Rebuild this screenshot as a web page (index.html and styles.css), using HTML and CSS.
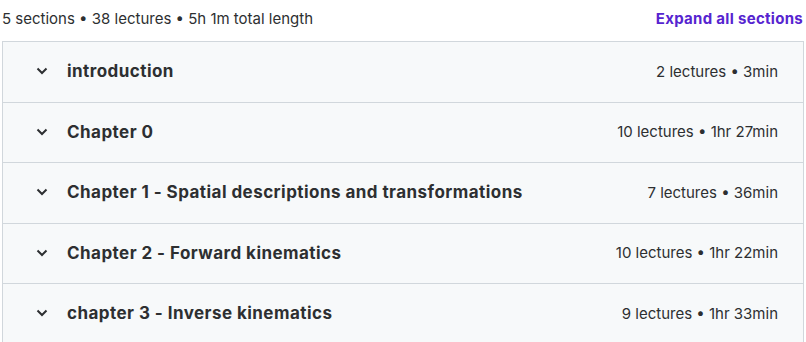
FILE: index.html
```html
<!DOCTYPE html>
<html lang="en">
<head>
  <meta charset="UTF-8">
  <meta name="viewport" content="width=device-width, initial-scale=1.0">
  <link rel="stylesheet" href="styles.css">
  <title>Course content</title>
</head>
<body>

<div id="curriculum">
  <div class="summary">
    <span class="totals">5 sections • 38 lectures • 5h 1m total length</span>
    <button class="expand">Expand all sections</button>
  </div>

  <div class="sections">
    <div class="section">
      <svg class="chevron" viewBox="0 0 12 8"><path d="M1.5 1.5 L6 6 L10.5 1.5"/></svg>
      <span class="title">introduction</span>
      <span class="meta">2 lectures • 3min</span>
    </div>
    <div class="section">
      <svg class="chevron" viewBox="0 0 12 8"><path d="M1.5 1.5 L6 6 L10.5 1.5"/></svg>
      <span class="title">Chapter 0</span>
      <span class="meta">10 lectures • 1hr 27min</span>
    </div>
    <div class="section">
      <svg class="chevron" viewBox="0 0 12 8"><path d="M1.5 1.5 L6 6 L10.5 1.5"/></svg>
      <span class="title">Chapter 1 - Spatial descriptions and transformations</span>
      <span class="meta">7 lectures • 36min</span>
    </div>
    <div class="section">
      <svg class="chevron" viewBox="0 0 12 8"><path d="M1.5 1.5 L6 6 L10.5 1.5"/></svg>
      <span class="title">Chapter 2 - Forward kinematics</span>
      <span class="meta">10 lectures • 1hr 22min</span>
    </div>
    <div class="section">
      <svg class="chevron" viewBox="0 0 12 8"><path d="M1.5 1.5 L6 6 L10.5 1.5"/></svg>
      <span class="title">chapter 3 - Inverse kinematics</span>
      <span class="meta">9 lectures • 1hr 33min</span>
    </div>
  </div>
</div>

</body>
</html>
```

FILE: styles.css
```css
body {
  font-family: Inter, "Noto Sans", sans-serif;
  color: #2d2f31;
  background-color: #fff;
  margin: 0;
  padding: 0 2px;
}

.summary {
  display: flex;
  justify-content: space-between;
  align-items: center;
  height: 36px;
  padding-right: 1px;
  margin-bottom: 5px;
}

.totals {
  font-size: 15px;
}

.expand {
  font-family: inherit;
  font-size: 15px;
  font-weight: 700;
  letter-spacing: 0.3px;
  color: #5624d0;
  background: none;
  border: none;
  padding: 0;
  cursor: pointer;
}

.sections {
  border: 1px solid #d1d7dc;
  border-bottom: none;
}

.section {
  display: flex;
  align-items: center;
  height: 58.5px;
  padding: 0 25px 1px 33px;
  background-color: #f7f9fa;
  border-bottom: 1px solid #d1d7dc;
}

.chevron {
  width: 12px;
  height: 8px;
  margin-right: 19px;
  fill: none;
  stroke: #2d2f31;
  stroke-width: 2;
}

.title {
  flex: 1;
  font-size: 17px;
  font-weight: 700;
  letter-spacing: 0.45px;
}

.meta {
  font-size: 15px;
}
```
